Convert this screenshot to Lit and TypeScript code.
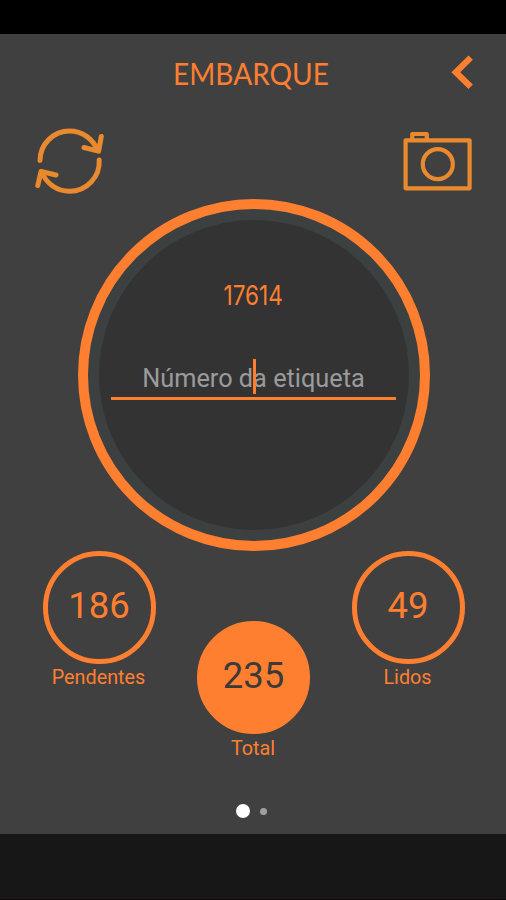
import { LitElement, html, css } from "lit";
import { customElement, property, state } from "lit/decorators.js";
import { classMap } from "lit/directives/class-map.js";

@customElement("stat-circle")
class StatCircle extends LitElement {
  @property() value = "";
  @property() label = "";
  @property({ type: Boolean }) filled = false;

  static styles = css`
    :host {
      display: flex;
      flex-direction: column;
      align-items: center;
      width: 113px;
      color: #ff7f30;
      font-family: Roboto, "Liberation Sans", sans-serif;
    }
    .circle {
      box-sizing: border-box;
      width: 113px;
      height: 113px;
      border: 5px solid #ff7f30;
      border-radius: 50%;
      display: flex;
      justify-content: center;
      padding-top: 28px;
      font-size: 36.5px;
      line-height: 43px;
    }
    .filled {
      background: #ff7f30;
      color: #3a3a38;
    }
    .label {
      margin: 2.5px 1px 0 0;
      font-size: 19.8px;
      line-height: 24px;
      white-space: nowrap;
    }
  `;

  render() {
    return html`
      <div class=${classMap({ circle: true, filled: this.filled })}>${this.value}</div>
      <div class="label">${this.label}</div>
    `;
  }
}

@customElement("app-root")
class AppRoot extends LitElement {
  @state() stats = [
    { value: "186", label: "Pendentes", filled: false },
    { value: "235", label: "Total", filled: true },
    { value: "49", label: "Lidos", filled: false },
  ];

  static styles = css`
    :host {
      display: flex;
      flex-direction: column;
      width: 506px;
      height: 900px;
      overflow: hidden;
      background: #404040;
      color: #ff7f30;
      font-family: Roboto, "Liberation Sans", sans-serif;
    }
    .status {
      height: 34px;
      flex: none;
      background: #000;
    }
    .header {
      flex: none;
      height: 78px;
      display: grid;
      grid-template-columns: 92px 1fr 92px;
      align-items: center;
    }
    .title {
      grid-column: 2;
      margin: 0 4px 1px 0;
      text-align: center;
      font: 400 31px/40px Lato, sans-serif;
      transform: scaleX(0.905);
      white-space: nowrap;
    }
    .back {
      display: block;
      margin-left: 34px;
    }
    .tools {
      flex: none;
      height: 86px;
      display: flex;
      justify-content: space-between;
      padding: 0 30px 0 31px;
    }
    .tools svg {
      display: block;
      margin-top: 12px;
    }
    .ring {
      flex: none;
      box-sizing: border-box;
      width: 352px;
      height: 352px;
      margin: 0.5px 0 0 77.5px;
      border: 10.5px solid #ff7f30;
      border-radius: 50%;
      background: #3c4040;
      padding: 11px;
    }
    .disc {
      box-sizing: border-box;
      height: 310px;
      border-radius: 50%;
      background: #333;
      display: flex;
      flex-direction: column;
      align-items: center;
      padding-top: 57px;
    }
    .code {
      font: 400 27.5px/36px Inter, sans-serif;
      transform: scaleX(0.82);
    }
    .field {
      position: relative;
      box-sizing: border-box;
      width: 285px;
      height: 41px;
      margin-top: 46px;
      border-bottom: 3px solid #ff7f30;
      text-align: center;
      font-size: 25.3px;
      line-height: 39px;
      color: #9b9b9b;
      white-space: nowrap;
    }
    .caret {
      position: absolute;
      left: 141.5px;
      top: 0;
      width: 3.5px;
      height: 35px;
      background: #ff7f30;
    }
    .stats {
      flex: none;
      display: flex;
      justify-content: space-between;
      padding: 0 41.5px 0 42.5px;
    }
    .lowered {
      margin-top: 70.5px;
    }
    .pager {
      flex: 1;
      display: flex;
      justify-content: center;
      align-items: center;
      gap: 10.5px;
      padding: 28px 3px 0 0;
      box-sizing: border-box;
    }
    .dot {
      width: 7px;
      height: 7px;
      border-radius: 50%;
      background: #a0a0a0;
    }
    .active {
      width: 14px;
      height: 14px;
      background: #fff;
    }
    .nav {
      flex: none;
      box-sizing: border-box;
      height: 66.5px;
      background: #171717;
      border-bottom: 1px solid #0e070c;
    }
  `;

  render() {
    return html`
      <div class="status"></div>
      <div class="header">
        <h1 class="title">EMBARQUE</h1>
        <svg class="back" width="30" height="40" viewBox="0 0 30 40" fill="none" stroke="#ff7f30" stroke-width="6.2">
          <path d="M22.7 4.6 7.8 19.2 22.7 33.8" />
        </svg>
      </div>
      <div class="tools">
        <svg width="78" height="74" viewBox="31 124 78 74" fill="none" stroke="#e98a2e" stroke-width="5" stroke-linecap="round" stroke-linejoin="round">
          <path d="M40 160.5A29.6 29.6 0 0 1 69.6 131A29.6 29.6 0 0 1 97.5 150.5" />
          <path d="M101.3 136.5 98.6 151.2 84 147.5" />
          <path d="M99.2 160A29.6 29.6 0 0 1 69.6 191.3A29.6 29.6 0 0 1 41.8 172" />
          <path d="M37.8 185.5 41 171.5 56 175" />
        </svg>
        <svg width="76" height="74" viewBox="400 124 76 74" fill="none" stroke="#e98a2e" stroke-width="4.2" stroke-linejoin="round">
          <rect x="405.6" y="140.3" width="64" height="48" />
          <path d="M412.2 140V134H426.8V140" />
          <circle cx="437.8" cy="164.2" r="15" />
        </svg>
      </div>
      <div class="ring">
        <div class="disc">
          <div class="code">17614</div>
          <div class="field">Número da etiqueta<span class="caret"></span></div>
        </div>
      </div>
      <div class="stats">
        ${this.stats.map(
          (s) => html`<stat-circle
            class=${classMap({ lowered: s.filled })}
            .value=${s.value}
            .label=${s.label}
            .filled=${s.filled}
          ></stat-circle>`
        )}
      </div>
      <div class="pager">
        <span class="dot active"></span>
        <span class="dot"></span>
      </div>
      <div class="nav"></div>
    `;
  }
}
